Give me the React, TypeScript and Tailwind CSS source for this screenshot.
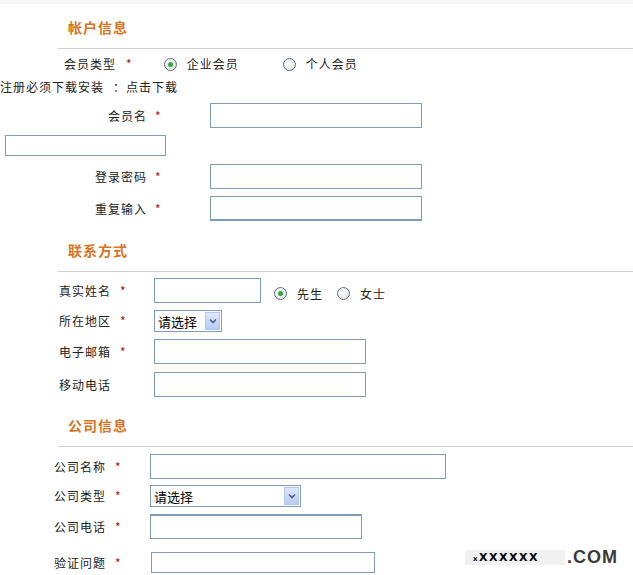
import React from "react";

const font = "font-['SimSun','Noto_Sans_CJK_SC',sans-serif]";

function Star() {
  return <span className="text-[#b01010] text-[12px]">*</span>;
}

function Radio({ checked }: { checked?: boolean }) {
  return (
    <span className="inline-flex items-center justify-center w-[13px] h-[13px] rounded-full border border-[#5a7590] bg-[radial-gradient(circle_at_35%_35%,#ffffff,#dcdcd6)] shrink-0">
      {checked && <span className="w-[5px] h-[5px] rounded-full bg-[#2fa83a]" />}
    </span>
  );
}

function TextBox({ w, h = "h-[25px]", extra = "" }: { w: string; h?: string; extra?: string }) {
  return <div className={`${w} ${h} border border-[#7f9db9] bg-white shrink-0 ${extra}`} />;
}

function Select({ w }: { w: string }) {
  return (
    <div className={`${w} h-[22px] border border-[#7f9db9] bg-white flex items-center justify-between pl-[3px] pr-[1px] shrink-0`}>
      <span className="text-[13px] text-black leading-none tracking-[0px]">请选择</span>
      <span className="w-[15px] h-[18px] bg-gradient-to-b from-[#dfe8fb] to-[#b8cbf4] border border-[#b5c6ee] flex items-center justify-center">
        <svg width="8" height="6" viewBox="0 0 8 6">
          <path d="M1 1.5 L4 4.5 L7 1.5" fill="none" stroke="#4d6185" strokeWidth="1.6" />
        </svg>
      </span>
    </div>
  );
}

function Heading({ title, mt }: { title: string; mt: string }) {
  return (
    <>
      <div className={`${mt} pl-[68px] h-[20px] flex items-center`}>
        <span className="text-[14px] font-bold tracking-[1px] text-[#d9731f]">{title}</span>
      </div>
      <div className="mt-[11px] ml-[58px] h-px bg-[#cfcfcf]" />
    </>
  );
}

function AccountRow({ label, mt, extra }: { label: string; mt: string; extra?: string }) {
  return (
    <div className={`${mt} h-[25px] flex items-center`}>
      <div className="w-[147px] text-right">{label}</div>
      <div className="w-[63px] pl-[8px]">
        <Star />
      </div>
      <TextBox w="w-[212px]" extra={extra} />
    </div>
  );
}

function ContactRow({
  label,
  star = true,
  mt,
  h = "h-[25px]",
  labelW,
  left,
  children,
}: {
  label: string;
  star?: boolean;
  mt: string;
  h?: string;
  labelW: string;
  left: string;
  children: React.ReactNode;
}) {
  return (
    <div className={`${mt} ${h} flex items-center ${left}`}>
      <div className={`${labelW} flex items-center`}>
        <span>{label}</span>
        {star && <span className="ml-[9px]"><Star /></span>}
      </div>
      {children}
    </div>
  );
}

export default function App() {
  return (
    <div className={`relative w-[633px] h-[575px] overflow-hidden bg-white text-[12px] leading-[16px] tracking-[1px] text-[#222222] ${font}`}>
      <div className="h-[4px] bg-[#f7f7f7]" />

      {/* 帐户信息 */}
      <Heading title="帐户信息" mt="mt-[13px]" />

      <div className="mt-[5px] h-[20px] flex items-center">
        <div className="w-[64px] shrink-0" />
        <span>会员类型</span>
        <span className="ml-[10px]"><Star /></span>
        <span className="ml-[31px] flex"><Radio checked /></span>
        <span className="ml-[10px]">企业会员</span>
        <span className="ml-[44px] flex"><Radio /></span>
        <span className="ml-[10px]">个人会员</span>
      </div>

      <div className="mt-[5px] h-[16px] flex">
        <span>注册必须下载安装</span>
        <span className="ml-[9px]">：</span>
        <span>点击下载</span>
      </div>

      <AccountRow label="会员名" mt="mt-[8px]" />
      <div className="mt-[7px] ml-[5px] h-[21px]">
        <TextBox w="w-[161px]" h="h-[21px]" />
      </div>
      <AccountRow label="登录密码" mt="mt-[8px]" />
      <AccountRow label="重复输入" mt="mt-[7px]" extra="border-b-2 border-b-[#7f9db9]" />

      {/* 联系方式 */}
      <Heading title="联系方式" mt="mt-[19px]" />

      <ContactRow label="真实姓名" mt="mt-[6px]" labelW="w-[95px]" left="pl-[59px]">
        <TextBox w="w-[107px]" />
        <div className="flex items-center mt-[6px]">
          <span className="ml-[13px] flex"><Radio checked /></span>
          <span className="ml-[10px]">先生</span>
          <span className="ml-[14px] flex"><Radio /></span>
          <span className="ml-[10px]">女士</span>
        </div>
      </ContactRow>
      <ContactRow label="所在地区" mt="mt-[7px]" h="h-[22px]" labelW="w-[95px]" left="pl-[59px]">
        <Select w="w-[68px]" />
      </ContactRow>
      <ContactRow label="电子邮箱" mt="mt-[7px]" labelW="w-[95px]" left="pl-[59px]">
        <TextBox w="w-[212px]" />
      </ContactRow>
      <ContactRow label="移动电话" star={false} mt="mt-[8px]" labelW="w-[95px]" left="pl-[59px]">
        <TextBox w="w-[212px]" />
      </ContactRow>

      {/* 公司信息 */}
      <Heading title="公司信息" mt="mt-[18px]" />

      <ContactRow label="公司名称" mt="mt-[7px]" labelW="w-[96px]" left="pl-[54px]">
        <TextBox w="w-[296px]" />
      </ContactRow>
      <ContactRow label="公司类型" mt="mt-[6px]" h="h-[22px]" labelW="w-[96px]" left="pl-[54px]">
        <Select w="w-[151px]" />
      </ContactRow>
      <ContactRow label="公司电话" mt="mt-[7px]" labelW="w-[96px]" left="pl-[54px]">
        <TextBox w="w-[212px]" extra="border-t-2 border-t-[#7f9db9]" />
      </ContactRow>
      <ContactRow label="验证问题" mt="mt-[13px]" h="h-[21px]" labelW="w-[97px]" left="pl-[54px]">
        <TextBox w="w-[224px]" h="h-[21px]" />
      </ContactRow>

      {/* watermark */}
      <div className="absolute left-[465px] top-[548px] flex items-center">
        <div className="w-[100px] h-[15px] bg-[#f1f1f1] flex items-center pl-[8px]">
          <span className="font-['DejaVu_Sans',sans-serif] font-black text-[11px] tracking-[1.5px] text-black leading-none">
            <span className="text-[7px]">x</span>XXXXXX
          </span>
        </div>
        <span className="ml-[2px] font-['Liberation_Sans',sans-serif] font-bold text-[18px] tracking-[1px] text-[#3a3a3a] leading-none">
          .COM
        </span>
      </div>
    </div>
  );
}
